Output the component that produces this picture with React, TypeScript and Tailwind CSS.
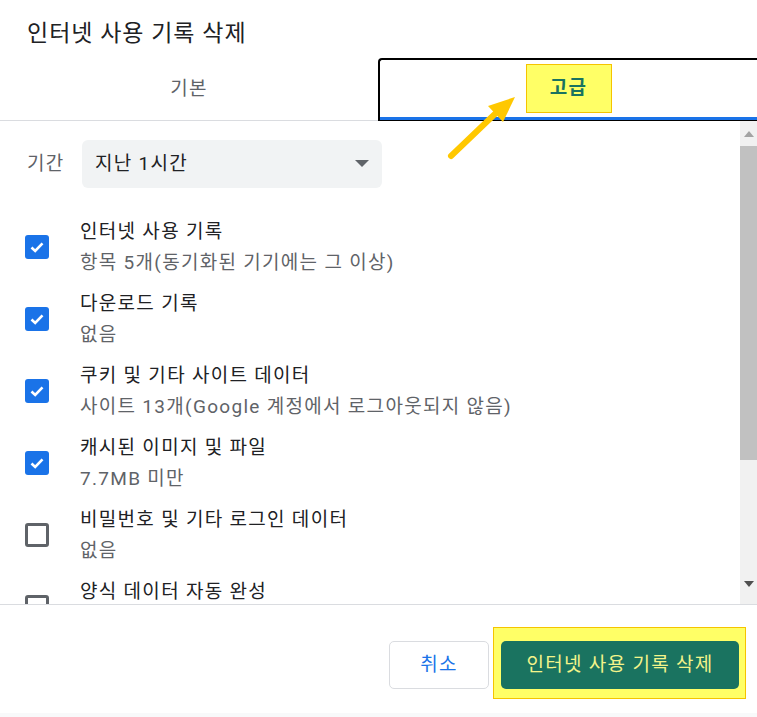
import React from 'react';

const rows = [
  { title: '인터넷 사용 기록', sub: '항목 5개(동기화된 기기에는 그 이상)', checked: true },
  { title: '다운로드 기록', sub: '없음', checked: true },
  { title: '쿠키 및 기타 사이트 데이터', sub: '사이트 13개(Google 계정에서 로그아웃되지 않음)', checked: true },
  { title: '캐시된 이미지 및 파일', sub: '7.7MB 미만', checked: true },
  { title: '비밀번호 및 기타 로그인 데이터', sub: '없음', checked: false },
  { title: '양식 데이터 자동 완성', sub: '', checked: false },
];

function Checkbox({ checked }: { checked: boolean }) {
  if (checked) {
    return (
      <div className="w-[24px] h-[24px] rounded-[3px] bg-[#1a73e8] flex items-center justify-center shrink-0">
        <svg width="16" height="16" viewBox="0 0 16 16">
          <path d="M2.5 8.5 L6.2 12 L13.5 4.3" fill="none" stroke="white" strokeWidth="2.6" />
        </svg>
      </div>
    );
  }
  return <div className="w-[24px] h-[24px] rounded-[3px] border-[3px] border-[#5f6368] shrink-0" />;
}

export default function App() {
  return (
    <div
      className="relative w-[757px] h-[717px] bg-white overflow-hidden flex flex-col"
      style={{ fontFamily: 'Roboto, "Noto Sans CJK KR", sans-serif' }}
    >
      <div className="h-[58px] pl-[27px] pt-[20px]">
        <h1 className="text-[23px] leading-[28px] tracking-[1px] text-[#202124] font-normal">인터넷 사용 기록 삭제</h1>
      </div>

      {/* tabs */}
      <div className="flex h-[63px]">
        <div className="w-[378px] border-b border-[#dadce0] flex items-center justify-center text-[19px] tracking-[1.3px] text-[#5f6368]">
          기본
        </div>
        <div className="flex-1 border-l-2 border-t-2 border-b border-black rounded-tl-[4px] flex flex-col">
          <div className="flex-1 flex items-center justify-center">
            <div className="w-[86px] h-[49px] bg-[#ffff66] border border-[#f5c400] flex items-center justify-center text-[19px] tracking-[1.3px] font-bold text-[#1a7360]">
              고급
            </div>
          </div>
          <div className="h-[3px] bg-[#1a73e8]" />
        </div>
      </div>

      {/* content */}
      <div className="flex h-[483px]">
        <div className="flex-1 overflow-hidden pt-[19px] text-[19px] tracking-[1.3px]">
          <div className="flex items-center">
            <span className="w-[82px] pl-[27px] text-[#5f6368]">기간</span>
            <div className="w-[300px] h-[48px] rounded-[6px] bg-[#f1f3f4] flex items-center justify-between pl-[13px] pr-[13px]">
              <span className="text-[#202124]">지난 1시간</span>
              <svg width="14" height="8" viewBox="0 0 14 8">
                <path d="M0 0 L14 0 L7 7 Z" fill="#5f6368" />
              </svg>
            </div>
          </div>
          <div className="mt-[23px] flex flex-col">
            {rows.map((r) => (
              <div key={r.title} className="flex items-center h-[72px] pl-[25px] gap-[31px] shrink-0">
                <Checkbox checked={r.checked} />
                <div className="flex flex-col leading-[31px]">
                  <span className="text-[#202124]">{r.title}</span>
                  <span className="text-[#5f6368]">{r.sub || '\u00a0'}</span>
                </div>
              </div>
            ))}
          </div>
        </div>
        {/* scrollbar */}
        <div className="w-[17px] bg-[#f1f1f1] flex flex-col items-center">
          <div className="h-[25px] flex items-center justify-center">
            <svg width="10" height="6" viewBox="0 0 10 6">
              <path d="M0 6 L10 6 L5 0 Z" fill="#a3a3a3" />
            </svg>
          </div>
          <div className="w-[17px] h-[314px] bg-[#c1c1c1]" />
          <div className="flex-1" />
          <div className="h-[26px] flex items-start justify-center pt-[3px]">
            <svg width="10" height="6" viewBox="0 0 10 6">
              <path d="M0 0 L10 0 L5 6 Z" fill="#505050" />
            </svg>
          </div>
        </div>
      </div>

      {/* footer */}
      <div className="h-[109px] border-t border-[#dadce0] flex justify-end items-start pt-[22px] pr-[11px] gap-[4px] text-[19px] tracking-[1.3px]">
        <button className="mt-[14px] w-[100px] h-[48px] rounded-[5px] border border-[#dadce0] text-[#1a73e8] bg-white">
          취소
        </button>
        <div className="bg-[#ffff66] border border-[#f5c400] pt-[13px] pb-[9px] pl-[7px] pr-[6px]">
          <button className="w-[238px] h-[48px] rounded-[5px] bg-[#1a7360] text-[#f3f48a]">
            인터넷 사용 기록 삭제
          </button>
        </div>
      </div>
      <div className="flex-1 bg-[#f8f9fa]" />

      {/* annotation arrow */}
      <svg className="absolute left-0 top-0 pointer-events-none" width="757" height="717">
        <line x1="451" y1="156" x2="497" y2="112" stroke="#ffc800" strokeWidth="6" strokeLinecap="round" />
        <path d="M515 97 L488 106 L503 122 Z" fill="#ffc800" />
      </svg>
    </div>
  );
}
